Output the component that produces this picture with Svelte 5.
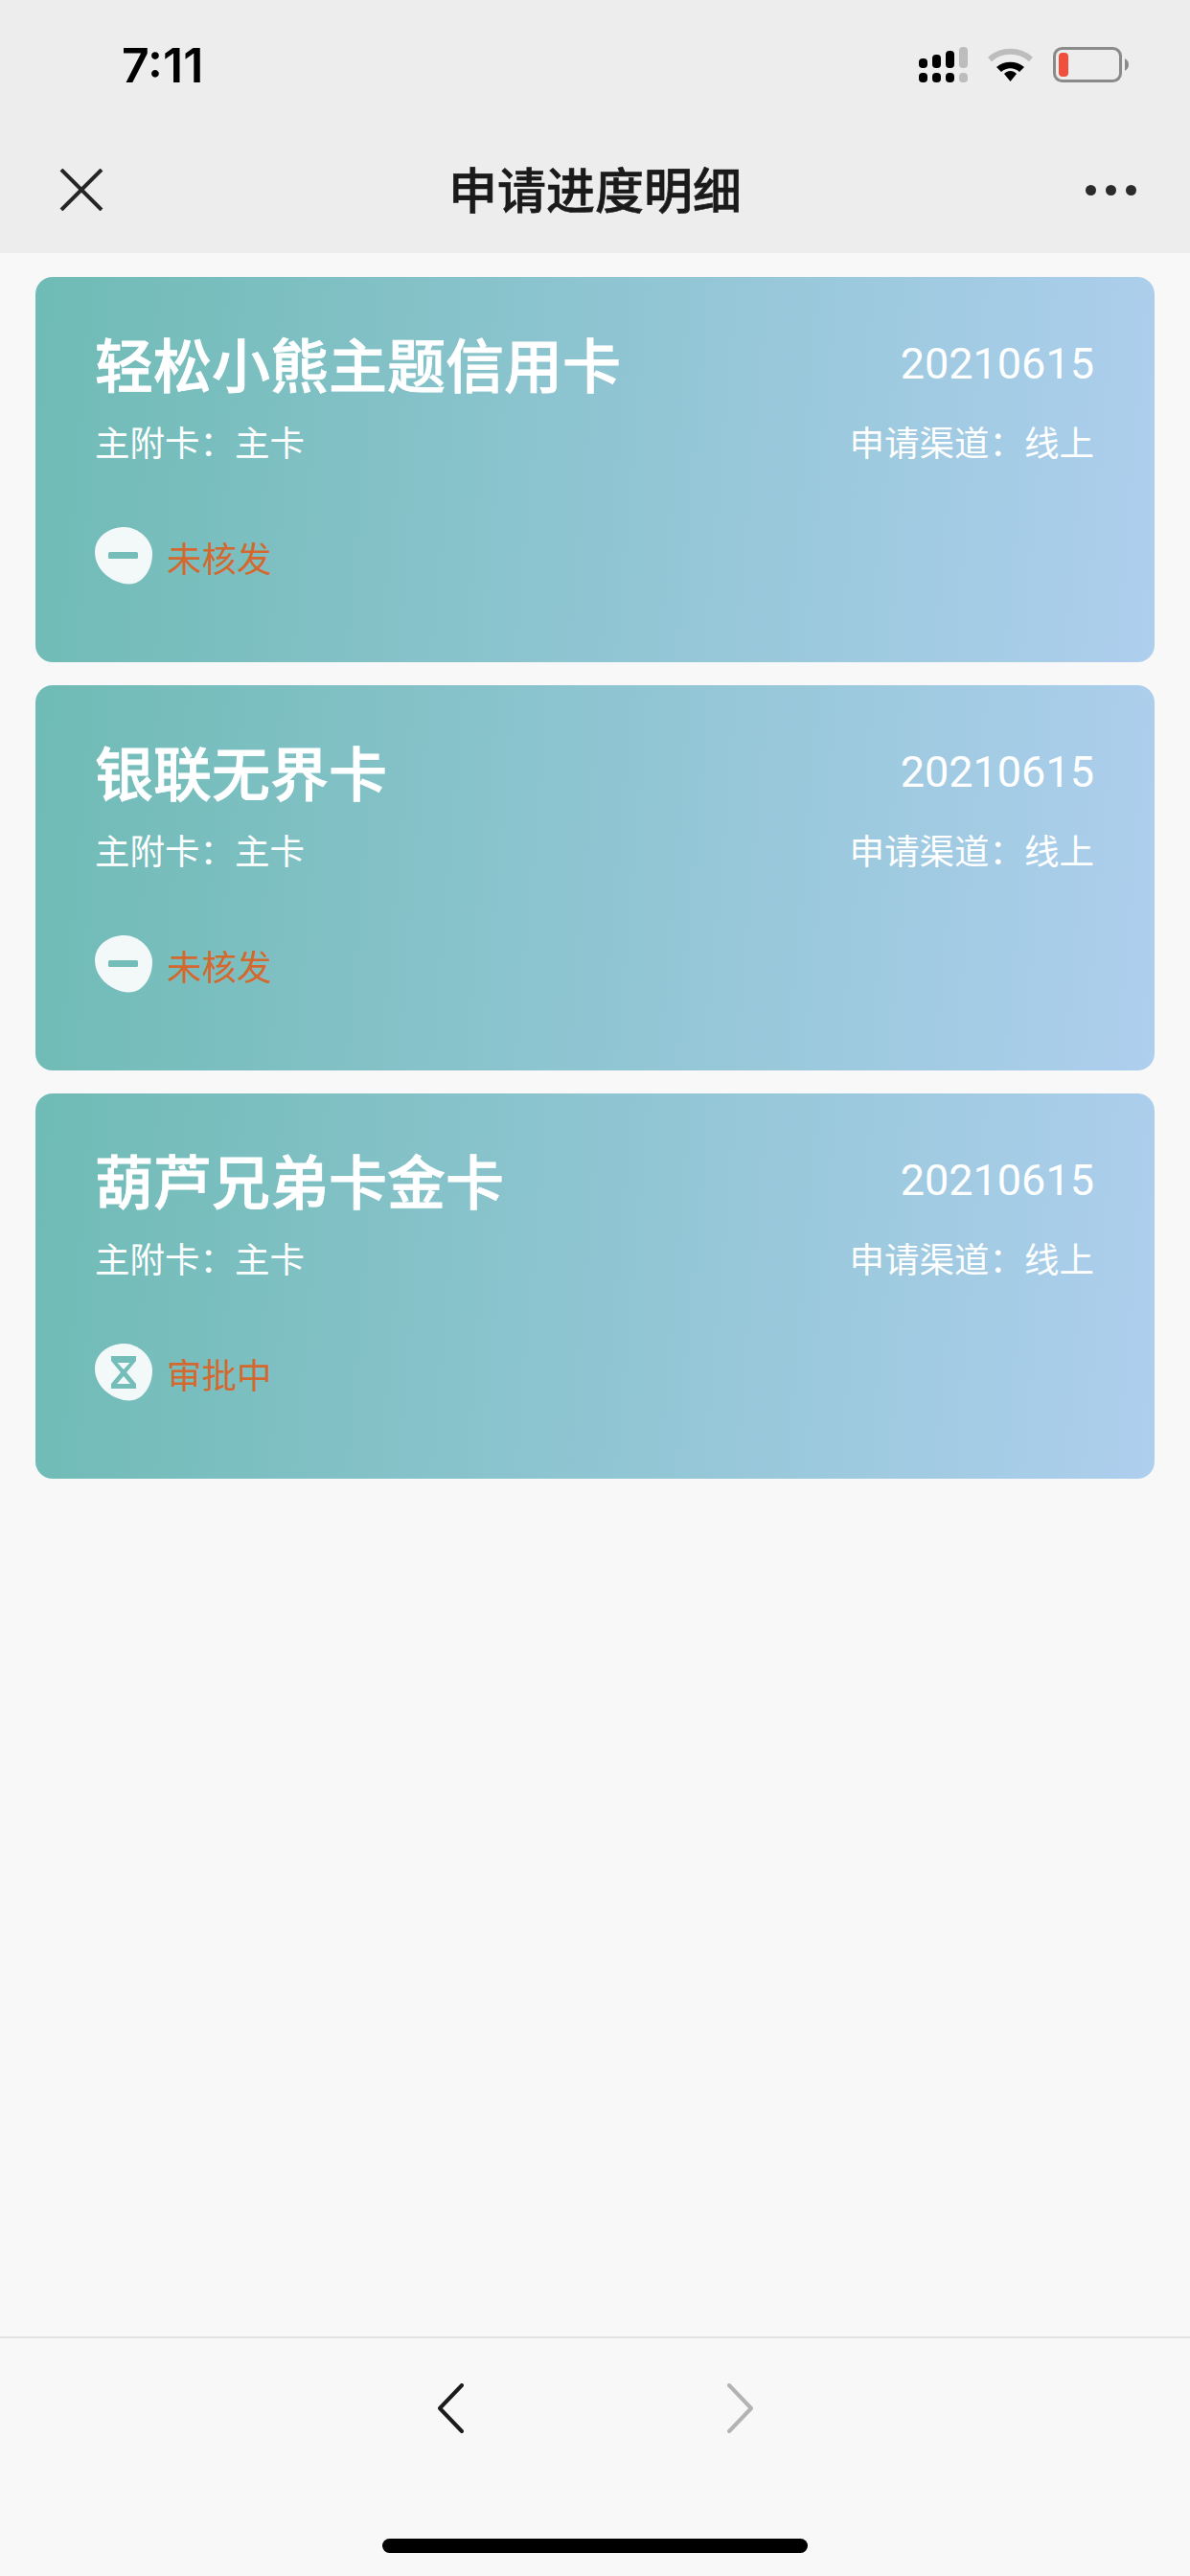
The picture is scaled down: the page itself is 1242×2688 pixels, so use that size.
<script lang="ts">
	const cards = [
		{ name: '轻松小熊主题信用卡', status: '未核发', pending: false },
		{ name: '银联无界卡', status: '未核发', pending: false },
		{ name: '葫芦兄弟卡金卡', status: '审批中', pending: true }
	];
</script>

<div class="page">
	<header>
		<div class="status-bar">
			<span class="time">7:11</span>
			<div class="status-icons">
				<svg width="51" height="38" viewBox="0 0 51 38">
					<rect x="0" y="12" width="9" height="10" rx="4" />
					<rect x="14" y="8" width="9" height="14" rx="4" />
					<rect x="28" y="4" width="9" height="18" rx="4" />
					<rect class="dim" x="42" y="0" width="9" height="22" rx="4" />
					<rect x="0" y="27" width="9" height="10" rx="4" />
					<rect x="14" y="27" width="9" height="10" rx="4" />
					<rect x="28" y="27" width="9" height="10" rx="4" />
					<rect class="dim" x="42" y="27" width="9" height="10" rx="4" />
				</svg>
				<svg width="47" height="37" viewBox="0 0 47 37">
					<path d="M2 13 C14 2 33 2 45 13" fill="none" stroke="#bdbdbd" stroke-width="6" />
					<path d="M9 21 C17 14 30 14 38 21 L33 26 C27 21 20 21 14 26 Z" />
					<path d="M23.5 25 C26 25 28 26 30 28 L23.5 36 L17 28 C19 26 21 25 23.5 25 Z" />
				</svg>
				<svg width="80" height="38" viewBox="0 0 80 38">
					<rect x="1.5" y="1.5" width="69" height="34" rx="8" fill="none" stroke="#8a8a8a" stroke-width="3" />
					<rect x="6" y="6" width="10" height="25" rx="4" fill="#ef4f3b" />
					<path d="M75 12 C78 14 79 16 79 18.500 C79 21 78 23 75 25 Z" fill="#8a8a8a" />
				</svg>
			</div>
		</div>
		<nav>
			<svg class="close" width="46" height="44" viewBox="0 0 46 44">
				<path d="M2 1 L44 43 M44 1 L2 43" fill="none" stroke="#262626" stroke-width="4" />
			</svg>
			<h1>申请进度明细</h1>
			<div class="more"><i></i><i></i><i></i></div>
		</nav>
	</header>

	<main>
		{#each cards as card}
			<section class="card">
				<div class="row">
					<h2>{card.name}</h2>
					<span class="date">20210615</span>
				</div>
				<div class="row sub">
					<span>主附卡：主卡</span>
					<span>申请渠道：线上</span>
				</div>
				<div class="state">
					<svg width="60" height="60" viewBox="0 0 60 60">
						<path d="M31 0 C44 0 60 12 60 28 C60 44 50 59.500 36 59.500 C20 59.500 0 46 0 26 C0 10 15 0 31 0 Z" fill="#f3f9f9" />
						{#if card.pending}
							<path d="M17 13 H43 V18 L33 30 L43 42 V47 H17 V42 L27 30 L17 18 Z" fill="#74bdb9" />
							<path d="M23.500 20 H36.500 L30 27 Z M30 34 L37 42 H23 Z" fill="#f3f9f9" />
						{:else}
							<rect x="14" y="26" width="31" height="7" rx="1.500" fill="#74bdb9" />
						{/if}
					</svg>
					<span>{card.status}</span>
				</div>
			</section>
		{/each}
	</main>

	<footer>
		<div class="arrows">
			<svg width="28" height="52" viewBox="0 0 28 52">
				<path d="M26 2 L3 26 L26 50" fill="none" stroke="#1c1c1c" stroke-width="4" stroke-linecap="round" stroke-linejoin="round" />
			</svg>
			<svg width="28" height="52" viewBox="0 0 28 52">
				<path d="M2 2 L25 26 L2 50" fill="none" stroke="#b3b3b3" stroke-width="4" stroke-linecap="round" stroke-linejoin="round" />
			</svg>
		</div>
		<div class="home"></div>
	</footer>
</div>

<style>
	:global(body) {
		margin: 0;
	}

	.page {
		display: flex;
		flex-direction: column;
		width: 1242px;
		height: 2688px;
		overflow: hidden;
		background: #f8f8f8;
		font-family: 'Noto Sans CJK SC', 'Liberation Sans', sans-serif;
	}

	header {
		background: #ededed;
		height: 264px;
	}

	.status-bar {
		display: flex;
		align-items: center;
		justify-content: space-between;
		box-sizing: border-box;
		height: 132px;
		padding: 3px 63px 0 127px;
	}

	.time {
		font-family: 'Inter', 'Liberation Sans', sans-serif;
		font-size: 50px;
		font-weight: 600;
		color: #000;
	}

	.status-icons {
		display: flex;
		align-items: center;
		gap: 21px;
	}

	.dim {
		fill: #bdbdbd;
	}

	nav {
		display: grid;
		grid-template-columns: 1fr auto 1fr;
		align-items: center;
		height: 132px;
		padding: 0 56px;
	}

	.close {
		margin-left: 6px;
	}

	h1 {
		margin: 0 0 4px;
		font-size: 51px;
		font-weight: 500;
		color: #1a1a1a;
		-webkit-text-stroke: 0.6px #1a1a1a;
	}

	.more {
		display: flex;
		justify-self: end;
		gap: 10px;
	}

	.more i {
		width: 11px;
		height: 11px;
		border-radius: 50%;
		background: #2b2b2b;
	}

	main {
		display: flex;
		flex: 1;
		flex-direction: column;
		gap: 24px;
		padding: 25px 37px 0;
	}

	.card {
		box-sizing: border-box;
		height: 402px;
		padding: 54px 63px 0 62px;
		border-radius: 18px;
		background: linear-gradient(95deg, #6fbbb5 0%, #aecfee 100%);
		color: #fff;
	}

	.row {
		display: flex;
		align-items: center;
		justify-content: space-between;
	}

	h2 {
		margin: 0;
		font-size: 61px;
		font-weight: 500;
		line-height: 72px;
		-webkit-text-stroke: 0.8px #fff;
	}

	.date {
		font-family: 'Roboto', 'Liberation Sans', sans-serif;
		font-size: 45px;
		font-weight: 400;
	}

	.sub {
		margin-top: 24px;
		font-size: 36.500px;
		line-height: 44px;
		font-weight: 400;
	}

	.state {
		display: flex;
		align-items: center;
		gap: 15px;
		margin-top: 67px;
		font-size: 36.500px;
		color: #d4692f;
	}

	.state span {
		padding-top: 2px;
	}

	footer {
		box-sizing: border-box;
		height: 250px;
		border-top: 2px solid #e2e2e2;
	}

	.arrows {
		display: flex;
		justify-content: center;
		gap: 275px;
		margin-top: 47px;
	}

	.home {
		width: 444px;
		height: 15px;
		margin: 110px auto 0;
		border-radius: 8px;
		background: #000;
	}
</style>
